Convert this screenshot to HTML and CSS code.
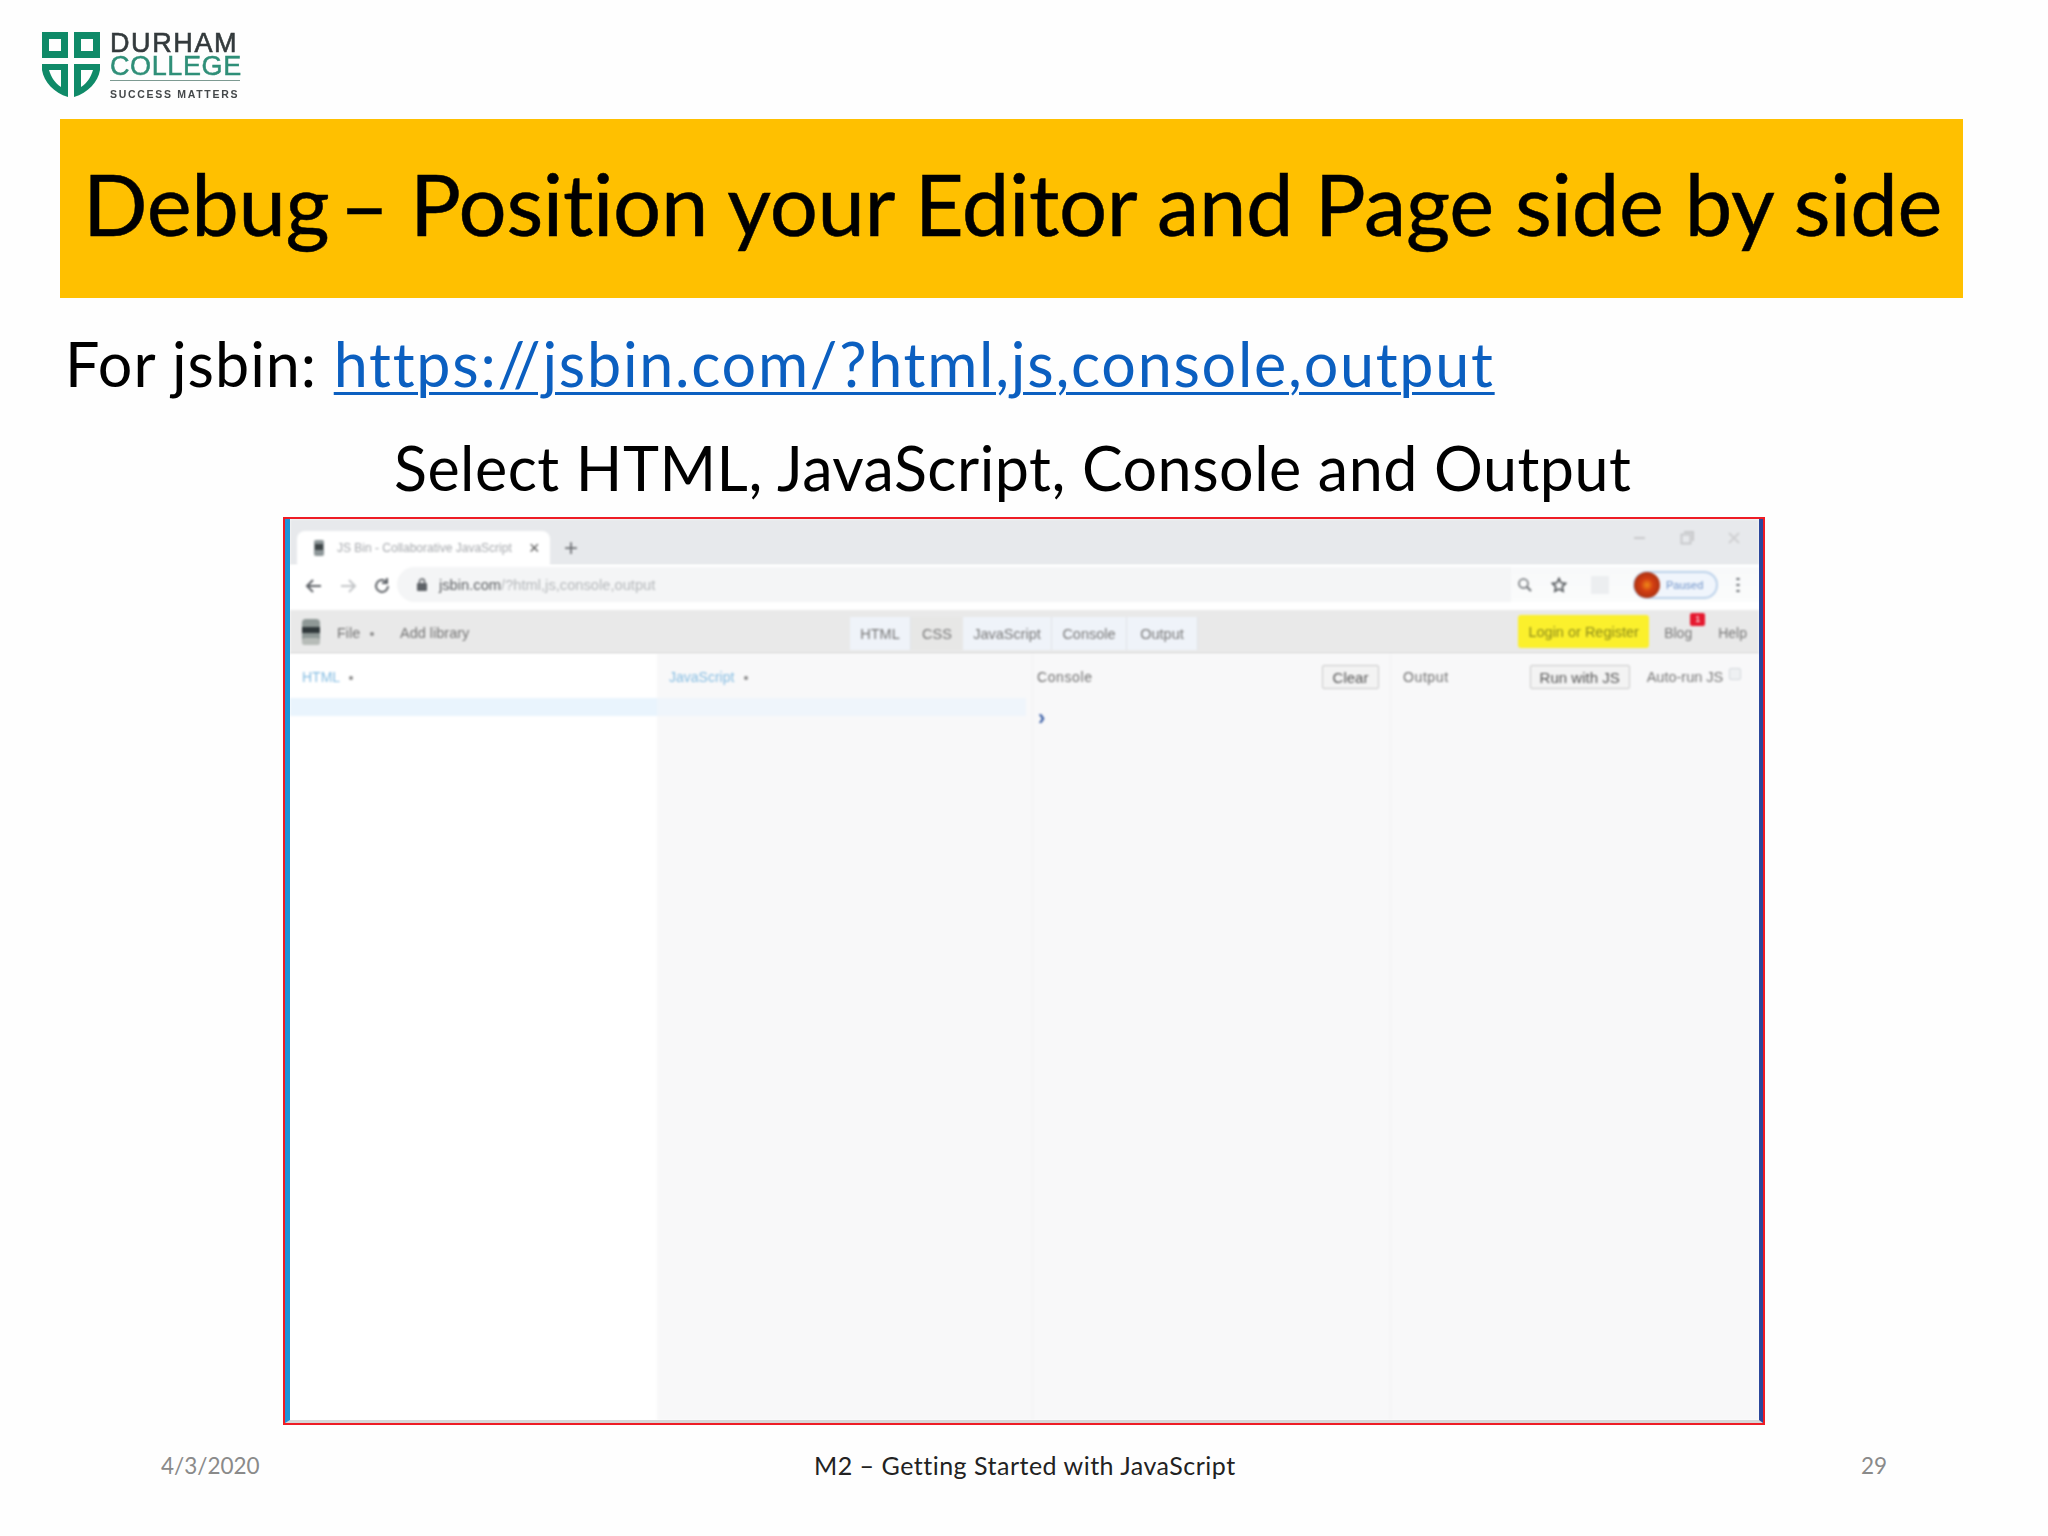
FILE: index.html
```html
<!DOCTYPE html>
<html lang="en">
<head>
<meta charset="utf-8">
<title>Debug - Position your Editor and Page side by side</title>
<link rel="stylesheet" href="styles.css">
</head>
<body>
<main class="slide">
  <header class="logo-row">
    <svg class="crest" width="58" height="66" viewBox="0 0 58 66">
      <path fill="#0f8a68" fill-rule="evenodd" d="M0 0h26v26H0zM7 7v12h12V7zM32 0h26v26H32zM39 7v12h12V7z"/>
      <path fill="#0f8a68" fill-rule="evenodd" d="M0 32h26v33C12 61 2 50 0 38zM7 38c2 7 6 13 12 17V38zM32 32h26v6c-2 12-12 23-26 27zM39 38v17c6-4 10-10 12-17z"/>
    </svg>
    <div class="wordmark">
      <div class="wm-durham">DURHAM</div>
      <div class="wm-college">COLLEGE</div>
      <div class="wm-tag">SUCCESS MATTERS</div>
    </div>
  </header>

  <section class="banner"><h1>Debug&#8201;– Position your Editor and Page side by side</h1></section>

  <p class="intro">For jsbin: <a href="#">https://jsbin.com/?html,js,console,output</a></p>
  <p class="select">Select HTML, JavaScript, Console and Output</p>

  <figure class="shot">
    <div class="browser">
      <div class="tabstrip">
        <div class="tab">
          <svg class="fav" width="12" height="16" viewBox="0 0 12 16"><rect x="1" width="10" height="16" rx="2" fill="#8d9698"/><rect x="2" y="4" width="8" height="6" fill="#3f4648"/></svg>
          <span class="tab-title">JS Bin - Collaborative JavaScript</span>
          <span class="tab-x">×</span>
        </div>
        <span class="tab-plus">+</span>
        <div class="winctl">
          <svg width="14" height="14" viewBox="0 0 14 14"><path d="M1 7h11" stroke="#c8c9cb" stroke-width="2"/></svg>
          <svg width="14" height="14" viewBox="0 0 14 14"><path d="M1.500 3.500h9v9h-9zM4 1h9v9" fill="none" stroke="#c8c9cb" stroke-width="2"/></svg>
          <svg width="14" height="14" viewBox="0 0 14 14"><path d="M2 2l10 10M12 2L2 12" stroke="#cfd0d2" stroke-width="2"/></svg>
        </div>
      </div>
      <div class="addressbar">
        <div class="navicons">
          <svg width="18" height="16" viewBox="0 0 18 16"><path d="M16 8H3M8 2L2 8l6 6" fill="none" stroke="#5f6368" stroke-width="2"/></svg>
          <svg width="18" height="16" viewBox="0 0 18 16"><path d="M2 8h13M10 2l6 6-6 6" fill="none" stroke="#c4c6c9" stroke-width="2"/></svg>
          <svg width="18" height="18" viewBox="0 0 18 18"><path d="M15 9a6 6 0 1 1-2-4.500M14 1v5H9" fill="none" stroke="#5f6368" stroke-width="2"/></svg>
        </div>
        <div class="omnibox">
          <svg width="10" height="13" viewBox="0 0 10 13"><rect y="5" width="10" height="8" rx="1" fill="#5f6368"/><path d="M2.500 5V3.500a2.500 2.500 0 0 1 5 0V5" fill="none" stroke="#5f6368" stroke-width="1.500"/></svg>
          <span class="url"><b>jsbin.com</b>/?html,js,console,output</span>
        </div>
        <div class="addr-right">
          <svg width="16" height="16" viewBox="0 0 16 16"><circle cx="6.500" cy="6.500" r="4.500" fill="none" stroke="#6a6e72" stroke-width="1.500"/><path d="M10 10l4 4" stroke="#6a6e72" stroke-width="2"/></svg>
          <svg width="16" height="16" viewBox="0 0 16 16"><path d="M8 1.500l2 4.300 4.600.6-3.400 3.200.9 4.600L8 11.900l-4.100 2.300.9-4.600L1.400 6.400 6 5.800z" fill="none" stroke="#55595d" stroke-width="1.700"/></svg>
          <span class="ext"></span>
          <span class="paused"><span class="avatar"></span><span>Paused</span></span>
          <svg width="4" height="16" viewBox="0 0 4 16"><path d="M2 1v2M2 7v2M2 13v2" stroke="#5f6368" stroke-width="3"/></svg>
        </div>
      </div>
      <div class="toolbar">
        <svg class="binlogo" width="18" height="26" viewBox="0 0 18 26"><rect width="18" height="26" rx="4" fill="#8f9896"/><rect y="8" width="18" height="6" fill="#30383a"/><rect y="19" width="18" height="7" rx="3" fill="#b7bcb8"/></svg>
        <span class="menu">File <i class="caret"></i></span>
        <span class="menu addlib">Add library</span>
        <div class="panels-nav">
          <span class="pbtn on w-html">HTML</span>
          <span class="pbtn w-css">CSS</span>
          <span class="pbtn on w-js">JavaScript</span>
          <span class="pbtn on w-con">Console</span>
          <span class="pbtn on w-out">Output</span>
        </div>
        <div class="tool-right">
          <span class="login">Login or Register</span>
          <span class="blog">Blog<span class="badge">1</span></span>
          <span class="help">Help</span>
        </div>
      </div>
      <div class="panels">
        <section class="panel p-html">
          <div class="phead"><span class="lbl-blue">HTML <i class="caret"></i></span></div>
          <div class="activeline"></div>
        </section>
        <section class="panel p-js">
          <div class="phead"><span class="lbl-blue">JavaScript <i class="caret"></i></span></div>
          <div class="activeline"></div>
        </section>
        <section class="panel p-console">
          <div class="phead"><span class="lbl">Console</span><span class="btn clear">Clear</span></div>
          <div class="prompt">›</div>
        </section>
        <section class="panel p-output">
          <div class="phead"><span class="lbl">Output</span><span class="btn run">Run with JS</span><span class="auto">Auto-run JS</span><span class="check"></span></div>
        </section>
      </div>
    </div>
  </figure>

  <footer class="foot">
    <span class="f-date">4/3/2020</span>
    <span class="f-mid">M2 – Getting Started with JavaScript</span>
    <span class="f-num">29</span>
  </footer>
</main>
</body>
</html>
```

FILE: styles.css
```css
* { box-sizing: border-box; }
html, body { margin: 0; padding: 0; background: #fefefe; }
body { width: 2048px; height: 1536px; overflow: hidden; font-family: "Lato", "Liberation Sans", sans-serif; color: #000; }
.slide { display: flex; flex-direction: column; width: 2048px; height: 1536px; }

/* logo */
.logo-row { height: 119px; padding: 32px 0 0 42px; display: flex; gap: 10px; align-items: flex-start; }
.crest { filter: blur(.7px); }
.wordmark { width: 130px; font-family: "Liberation Sans", sans-serif; filter: blur(.7px); }
.wm-durham { font-size: 27px; line-height: 22px; letter-spacing: 1.600px; color: #333a3c; white-space: nowrap; -webkit-text-stroke: .6px #333a3c; }
.wm-college { font-size: 27px; line-height: 24px; letter-spacing: .6px; color: #2f8f78; white-space: nowrap; border-bottom: 1px solid #7d9a92; padding-bottom: 3px; height: 27px; -webkit-text-stroke: .5px #2f8f78; }
.wm-tag { font-size: 10.500px; line-height: 12px; margin-top: 7px; font-weight: 700; letter-spacing: 1.700px; color: #44484a; white-space: nowrap; }

/* banner */
.banner { margin-left: 60px; width: 1903px; height: 179px; background: #ffc000; display: flex; align-items: center; padding: 0 0 10px 23px; }
.banner h1 { margin: 0; font-size: 85px; font-weight: 400; line-height: 1; white-space: nowrap; letter-spacing: -.34px; -webkit-text-stroke: .5px #000; filter: blur(.3px); }

/* text lines */
.intro { margin: 36px 0 0 65px; font-size: 61px; line-height: 60px; white-space: nowrap; letter-spacing: 1px; filter: blur(.3px); }
.intro a { color: #0b5fc0; letter-spacing: 1.750px; text-decoration: underline; text-decoration-thickness: 3px; text-underline-offset: 5px; }
.select { margin: 44px 0 0 394px; font-size: 61px; line-height: 60px; white-space: nowrap; letter-spacing: .5px; filter: blur(.3px); }

/* screenshot */
.shot { margin: 19px 0 0 283px; width: 1482px; height: 908px; border: 2px solid #ee1c25; background: #fff; }
.browser { height: 100%; display: flex; flex-direction: column; border-left: 5px solid #1f94d8; border-right: 4px solid #2b479c; border-bottom: 3px solid #d6d6d6; font-family: "Liberation Sans", sans-serif; font-size: 14px; color: #666; overflow: hidden; }
.browser > * { filter: blur(.8px); }
.tabstrip { height: 46px; flex: none; background: #e7e9ec; display: flex; align-items: flex-end; padding-left: 7px; }
.tab { width: 253px; height: 34px; background: #fff; border-radius: 8px 8px 0 0; display: flex; align-items: center; padding: 0 0 0 16px; gap: 12px; }
.tab-title { width: 180px; font-size: 12px; color: #a5a8ac; white-space: nowrap; }
.tab-x { font-size: 18px; line-height: 1; color: #555; }
.tab-plus { font-size: 24px; line-height: 34px; margin-left: 14px; color: #6c6f73; }
.winctl { margin-left: auto; align-self: flex-start; padding: 12px 18px 0 0; display: flex; gap: 33px; }
.addressbar { height: 45px; flex: none; background: #fff; display: flex; align-items: flex-start; padding-top: 2px; }
.navicons { width: 107px; padding: 10px 0 0 15px; display: flex; gap: 16px; align-items: center; }
.omnibox { width: 1114px; height: 35px; background: #f4f5f6; border-radius: 18px 0 0 18px; display: flex; align-items: center; gap: 12px; padding-left: 20px; }
.url { font-size: 14.700px; color: #b4b7ba; white-space: nowrap; }
.url b { font-weight: 400; color: #5a5d60; }
.addr-right { flex: 1; height: 35px; background: linear-gradient(#f8f9fa, #fbfcfc); display: flex; align-items: center; padding-left: 6px; }
.addr-right > svg:nth-child(2) { margin-left: 18px; }
.ext { width: 18px; height: 18px; background: #eceef0; margin-left: 24px; margin-right: 24px; }
.paused { width: 85px; height: 28px; border: 2px solid #bcd2ea; border-radius: 14px; background: #f0f5fc; display: flex; align-items: center; gap: 6px; font-size: 11px; color: #6f93c9; }
.avatar { width: 26px; height: 26px; margin-left: -1px; border-radius: 50%; background: radial-gradient(circle, #f08a18 0, #d23d12 35%, #8e2a12 100%); flex: none; }
.addr-right > svg:last-child { margin-left: 18px; }

.toolbar { height: 44px; flex: none; background: #e9e9e9; border-bottom: 1px solid #cfcfcf; display: flex; align-items: center; padding: 2px 0 0 12px; }
.binlogo { flex: none; margin-top: -2px; }
.menu { font-size: 14.500px; color: #747474; white-space: nowrap; }
.toolbar .menu:nth-child(2) { margin-left: 17px; width: 63px; }
.addlib { width: 450px; }
.caret { display: inline-block; width: 4px; height: 4px; border-radius: 50%; background: #8a8a8a; margin-left: 6px; vertical-align: middle; }
.panels-nav { display: flex; height: 33px; align-self: flex-start; margin-top: 5px; }
.pbtn { display: flex; align-items: center; justify-content: center; font-size: 14.500px; color: #777; background: #e7e7e6; }
.pbtn.on { background: #eff3f9; border-right: 1px solid #dfe2e6; }
.w-html { width: 61px; } .w-css { width: 52px; } .w-js { width: 89px; } .w-con { width: 75px; } .w-out { width: 71px; }
.tool-right { margin-left: auto; display: flex; align-items: center; padding-right: 12px; }
.login { width: 131px; height: 33px; margin: -2px 3px 0 0; background: #fbf02c; border-radius: 3px; display: flex; align-items: center; justify-content: center; font-size: 14.500px; color: #8c8a1c; white-space: nowrap; }
.blog { margin-left: 12px; position: relative; color: #777; }
.badge { position: absolute; left: 26px; top: -12px; width: 15px; height: 13px; border-radius: 2px; background: #e5192f; color: #fff; font-size: 9px; line-height: 13px; text-align: center; }
.help { margin-left: 26px; color: #777; }

.panels { flex: 1; display: flex; min-height: 0; }
.panel { flex: none; }
.p-html { width: 367px; background: #fff; }
.p-js { width: 375px; background: #f8f8f9; }
.p-console { width: 358px; background: #f8f8f9; border-left: 1px solid #f2f2f3; }
.p-output { flex: 1; background: #f8f8f9; border-left: 1px solid #f2f2f3; }
.phead { height: 44px; display: flex; align-items: center; padding: 2px 0 0 12px; }
.p-console .phead { padding-left: 4px; padding-right: 11px; }
.lbl-blue { font-size: 14px; color: #86bde2; white-space: nowrap; }
.lbl { font-size: 14px; color: #6e6e6e; letter-spacing: .6px; }
.activeline { height: 18px; background: #e9f4fd; }
.p-js .activeline { background: #eff5fb; margin-right: 6px; }
.btn { height: 24px; background: #f3f3f3; border: 1px solid #c8c8c8; border-radius: 2px; display: flex; align-items: center; justify-content: center; font-size: 15px; color: #555; white-space: nowrap; }
.clear { width: 57px; margin-left: auto; }
.run { width: 100px; margin-left: 81px; }
.auto { margin-left: 17px; font-size: 14.500px; color: #777; white-space: nowrap; }
.check { width: 12px; height: 12px; margin-left: 6px; margin-top: -6px; border: 1px solid #d4d8dc; border-radius: 2px; background: #eef0f2; }
.prompt { padding: 10px 0 0 5px; font-size: 22px; line-height: 20px; font-weight: 700; color: #3f62a8; }

/* footer */
.foot { display: flex; align-items: center; height: 30px; margin-top: 25px; padding-left: 161px; font-size: 22.500px; white-space: nowrap; }
.f-date { width: 653px; color: #8a8a8a; }
.f-mid { width: 1047px; color: #222; font-size: 25px; letter-spacing: .5px; }
.f-num { color: #8a8a8a; }
```
